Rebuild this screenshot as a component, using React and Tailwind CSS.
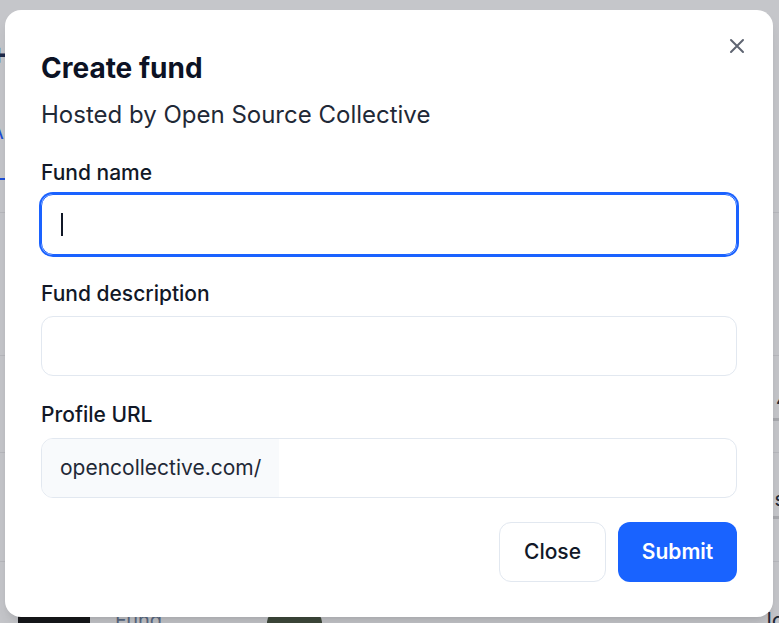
import React from "react";

export default function App() {
  return (
    <div
      className="relative h-[623px] w-[779px] overflow-hidden bg-[#c5c6ca]"
      style={{ fontFamily: "Inter, 'Noto Sans', sans-serif" }}
    >
      {/* dimmed page behind */}
      <div className="flex h-full flex-col">
        <div className="flex h-[178px] shrink-0 flex-col">
          <div className="ml-[-12px] mt-[38px] text-[30px] font-bold leading-[30px] text-[#1e2a4a]">+</div>
          <div className="ml-[-10px] mt-[52px] text-[20px] leading-[24px] text-[#1d4ed8]">A</div>
        </div>
        <div className="h-[2px] w-[6px] shrink-0 bg-[#1d4ed8]" />
        <div className="h-[33px] shrink-0 border-b border-[#b7b8bd]" />
        <div className="flex h-[143px] shrink-0 items-start justify-end border-b border-[#b7b8bd] pt-[96px] text-[20px] leading-[24px] text-[#4b5563]">
          <span className="mr-[-8px]">t</span>
        </div>
        <div className="flex h-[97px] shrink-0 flex-col items-end border-b border-[#b7b8bd] pt-[32px] text-[20px] text-[#1f2937]">
          <span className="mr-[-10px] leading-[24px]">4</span>
          <span className="mt-[6px] h-[3px] w-[6px] bg-[#a8a9ae]" />
        </div>
        <div className="flex h-[109px] shrink-0 flex-col items-end border-b border-[#b7b8bd] pt-[34px] text-[20px] text-[#1f2937]">
          <span className="mr-[-6px] leading-[24px]">s</span>
          <span className="mt-[5px] h-[3px] w-[6px] bg-[#a8a9ae]" />
        </div>
        <div className="flex flex-1 items-start pt-[46px]">
          <div className="ml-[18px] h-[40px] w-[72px] bg-[#17181b]" />
          <div className="ml-[25px] text-[20px] leading-[24px] text-[#5b6b85]">Fund</div>
          <div className="ml-[105px] mt-[4px] h-[20px] w-[55px] rounded-full bg-[#3f4a3c]" />
          <div className="ml-auto mr-[-6px] text-[22px] leading-[24px] text-[#1f2937]">lo</div>
        </div>
      </div>

      {/* modal overlay */}
      <div className="absolute inset-0 flex items-start justify-start pl-[5px] pt-[10px]">
        <div className="relative flex h-[607px] w-[768px] flex-col rounded-[16px] bg-white px-[36px] pt-[40px] shadow-lg">
          <button className="absolute right-[28px] top-[28px] flex h-[16px] w-[16px] items-center justify-center text-[#5f6572]">
            <svg width="16" height="16" viewBox="0 0 16 16" fill="none" stroke="currentColor" strokeWidth="2" strokeLinecap="round">
              <path d="M2 2L14 14M14 2L2 14" />
            </svg>
          </button>

          <h2 className="text-[28px] font-bold leading-[36px] text-[#0c1224]">Create fund</h2>
          <p className="mt-[15px] text-[24px] leading-[28px] text-[#1f2937]">Hosted by Open Source Collective</p>

          <label className="mt-[30px] text-[21px] font-medium leading-[28px] text-[#111827]">Fund name</label>
          <div className="mt-[7px] flex h-[61px] items-center rounded-[12px] border border-[#1a62ff] px-[19px] ring-2 ring-[#1a62ff]">
            <span className="h-[23px] w-[2px] bg-[#111827]" />
          </div>

          <label className="mt-[25px] text-[21px] font-medium leading-[28px] text-[#111827]">Fund description</label>
          <div className="mt-[8px] h-[60px] rounded-[12px] border border-[#e2e8f0]" />

          <label className="mt-[25px] text-[21px] font-medium leading-[28px] text-[#111827]">Profile URL</label>
          <div className="mt-[9px] flex h-[60px] overflow-hidden rounded-[12px] border border-[#e2e8f0]">
            <div className="flex w-[237px] items-center bg-[#f8fafc] pl-[18px] text-[21px] text-[#1f2937]">
              opencollective.com/
            </div>
            <div className="flex-1" />
          </div>

          <div className="mt-[24px] flex justify-end gap-[12px]">
            <button className="h-[60px] w-[107px] rounded-[12px] border border-[#e2e8f0] bg-white text-[21px] font-medium text-[#111827]">
              Close
            </button>
            <button className="h-[60px] w-[119px] rounded-[12px] bg-[#1963ff] text-[21px] font-semibold text-white">
              Submit
            </button>
          </div>
        </div>
      </div>
    </div>
  );
}
